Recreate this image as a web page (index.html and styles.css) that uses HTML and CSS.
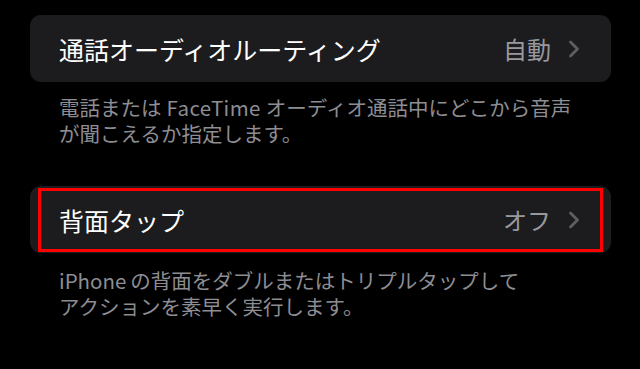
FILE: index.html
```html
<!DOCTYPE HTML>
<html>
<head>
    <meta charset='utf-8'>
    <link rel="stylesheet" href="styles.css">
</head>
<body>
    <div class="settingsList">

        <!-- 通話オーディオルーティング -->
        <div class="cell">
            <span class="cellTitle">通話オーディオルーティング</span>
            <span class="cellValue">自動</span>
            <svg class="chevron" width="12" height="18" viewBox="0 0 12 18">
                <polyline points="2.5,2 9.5,9 2.5,16" />
            </svg>
        </div>
        <div class="cellNote">
            <div>電話または<span class="latin">FaceTime</span>オーディオ通話中にどこから音声</div>
            <div>が聞こえるか指定します。</div>
        </div>

        <!-- 背面タップ -->
        <div class="cell cellSecond">
            <span class="cellTitle">背面タップ</span>
            <span class="cellValue">オフ</span>
            <svg class="chevron" width="12" height="18" viewBox="0 0 12 18">
                <polyline points="2.5,2 9.5,9 2.5,16" />
            </svg>
            <div class="highlight"></div>
        </div>
        <div class="cellNote noteSecond">
            <div><span class="latin latinStart">iPhone</span>の背面をダブルまたはトリプルタップして</div>
            <div>アクションを素早く実行します。</div>
        </div>

    </div>
</body>
</html>
```

FILE: styles.css
```css
body {
    margin: 0px;
    padding: 0px;
    background-color: #000000;
    font-family: "Noto Sans CJK JP", "Noto Sans", sans-serif;
}

.settingsList {
    display: flex;
    flex-direction: column;
    padding-top: 15px;
    padding-left: 30px;
    width: 581px;
}

.cell {
    position: relative;
    display: flex;
    align-items: center;
    height: 67px;
    padding-left: 29px;
    padding-right: 31px;
    background-color: #1c1c1e;
    border-radius: 11px;
}

.cellSecond {
    margin-top: 40px;
}

.cellTitle {
    flex: 1 1 auto;
    color: #ffffff;
    font-size: 25px;
    line-height: 30px;
}

.cellValue {
    color: #98989e;
    font-size: 24px;
    line-height: 30px;
    margin-right: 17px;
}

.chevron {
    display: block;
}

.chevron polyline {
    fill: none;
    stroke: #5e5e63;
    stroke-width: 2.8;
    stroke-linecap: round;
    stroke-linejoin: round;
}

.highlight {
    position: absolute;
    left: 8px;
    right: 8px;
    top: 2px;
    bottom: 1px;
    border: 3px solid #ff0000;
}

.cellNote {
    margin-top: 12px;
    padding-left: 29px;
    color: #8d8d93;
    font-size: 20.5px;
    line-height: 26px;
    white-space: nowrap;
}

.noteSecond {
    margin-top: 14px;
}

.latin {
    margin: 0px 5px;
    letter-spacing: 0.4px;
}

.latinStart {
    margin-left: 0px;
    margin-right: 4px;
    letter-spacing: 0px;
}
```
